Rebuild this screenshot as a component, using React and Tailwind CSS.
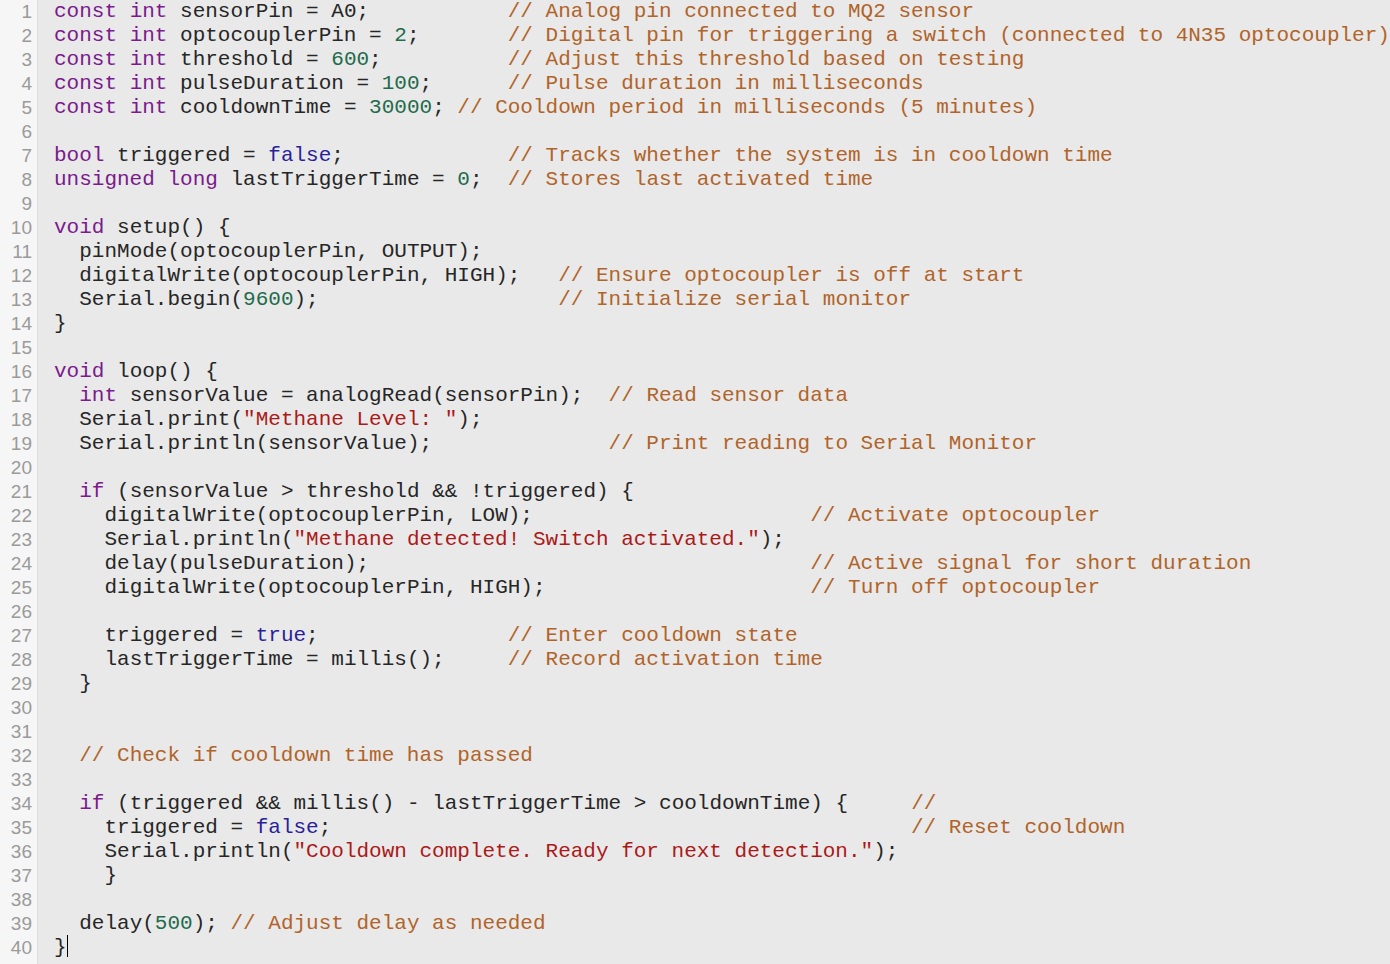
import React from 'react';

const code = [
  'const int sensorPin = A0;           // Analog pin connected to MQ2 sensor',
  'const int optocouplerPin = 2;       // Digital pin for triggering a switch (connected to 4N35 optocoupler)',
  'const int threshold = 600;          // Adjust this threshold based on testing',
  'const int pulseDuration = 100;      // Pulse duration in milliseconds',
  'const int cooldownTime = 30000; // Cooldown period in milliseconds (5 minutes)',
  '',
  'bool triggered = false;             // Tracks whether the system is in cooldown time',
  'unsigned long lastTriggerTime = 0;  // Stores last activated time',
  '',
  'void setup() {',
  '  pinMode(optocouplerPin, OUTPUT);',
  '  digitalWrite(optocouplerPin, HIGH);   // Ensure optocoupler is off at start',
  '  Serial.begin(9600);                   // Initialize serial monitor',
  '}',
  '',
  'void loop() {',
  '  int sensorValue = analogRead(sensorPin);  // Read sensor data',
  '  Serial.print("Methane Level: ");',
  '  Serial.println(sensorValue);              // Print reading to Serial Monitor',
  '',
  '  if (sensorValue > threshold && !triggered) {',
  '    digitalWrite(optocouplerPin, LOW);                      // Activate optocoupler',
  '    Serial.println("Methane detected! Switch activated.");',
  '    delay(pulseDuration);                                   // Active signal for short duration',
  '    digitalWrite(optocouplerPin, HIGH);                     // Turn off optocoupler',
  '',
  '    triggered = true;               // Enter cooldown state',
  '    lastTriggerTime = millis();     // Record activation time',
  '  }',
  '',
  '',
  '  // Check if cooldown time has passed',
  '',
  '  if (triggered && millis() - lastTriggerTime > cooldownTime) {     //',
  '    triggered = false;                                              // Reset cooldown',
  '    Serial.println("Cooldown complete. Ready for next detection.");',
  '    }',
  '',
  '  delay(500); // Adjust delay as needed',
  '}',
];

const keywords = ['const', 'int', 'bool', 'unsigned', 'long', 'void', 'if'];
const atoms = ['true', 'false'];

const colors = {
  keyword: 'text-[#7a1a8c]',
  atom: 'text-[#2a1f99]',
  number: 'text-[#1f6b4c]',
  string: 'text-[#aa1a1a]',
  comment: 'text-[#b0642a]',
  plain: 'text-[#262626]',
};

// tiny tokenizer, good enough for this snippet
function tokenize(line) {
  const out = [];
  const re = /(\/\/.*$)|("[^"]*")|(\b\d+\b)|([A-Za-z_]\w*)|(\s+|[^\sA-Za-z_\d"]+|.)/g;
  let m;
  while ((m = re.exec(line)) !== null) {
    if (m[1]) out.push(['comment', m[1]]);
    else if (m[2]) out.push(['string', m[2]]);
    else if (m[3]) out.push(['number', m[3]]);
    else if (m[4]) {
      if (keywords.includes(m[4])) out.push(['keyword', m[4]]);
      else if (atoms.includes(m[4])) out.push(['atom', m[4]]);
      else out.push(['plain', m[4]]);
    } else out.push(['plain', m[0]]);
  }
  return out;
}

const App = () => {
  return (
    <div className="flex min-h-screen bg-[#e9e9e9] overflow-hidden">
      <div className="w-[38px] shrink-0 bg-[#f6f6f6] border-r border-[#dddddd]">
        {code.map((_, i) => (
          <div
            key={i}
            className="h-[24px] leading-[24px] text-right pr-[5px] text-[19px] text-[#9a9a9a] font-['Liberation_Sans',Arial,sans-serif]"
          >
            {i + 1}
          </div>
        ))}
      </div>
      <div className="flex-1 pl-[16px] font-['Liberation_Mono','Courier_New',monospace] text-[21px]">
        {code.map((line, i) => (
          <div key={i} className="h-[24px] leading-[24px] whitespace-pre">
            {tokenize(line).map(([type, text], j) => (
              <span key={j} className={colors[type]}>
                {text}
              </span>
            ))}
            {i === code.length - 1 && (
              <span className="inline-block w-[1px] h-[22px] bg-black align-middle -mt-[3px]" />
            )}
          </div>
        ))}
      </div>
    </div>
  );
};

export default App;
